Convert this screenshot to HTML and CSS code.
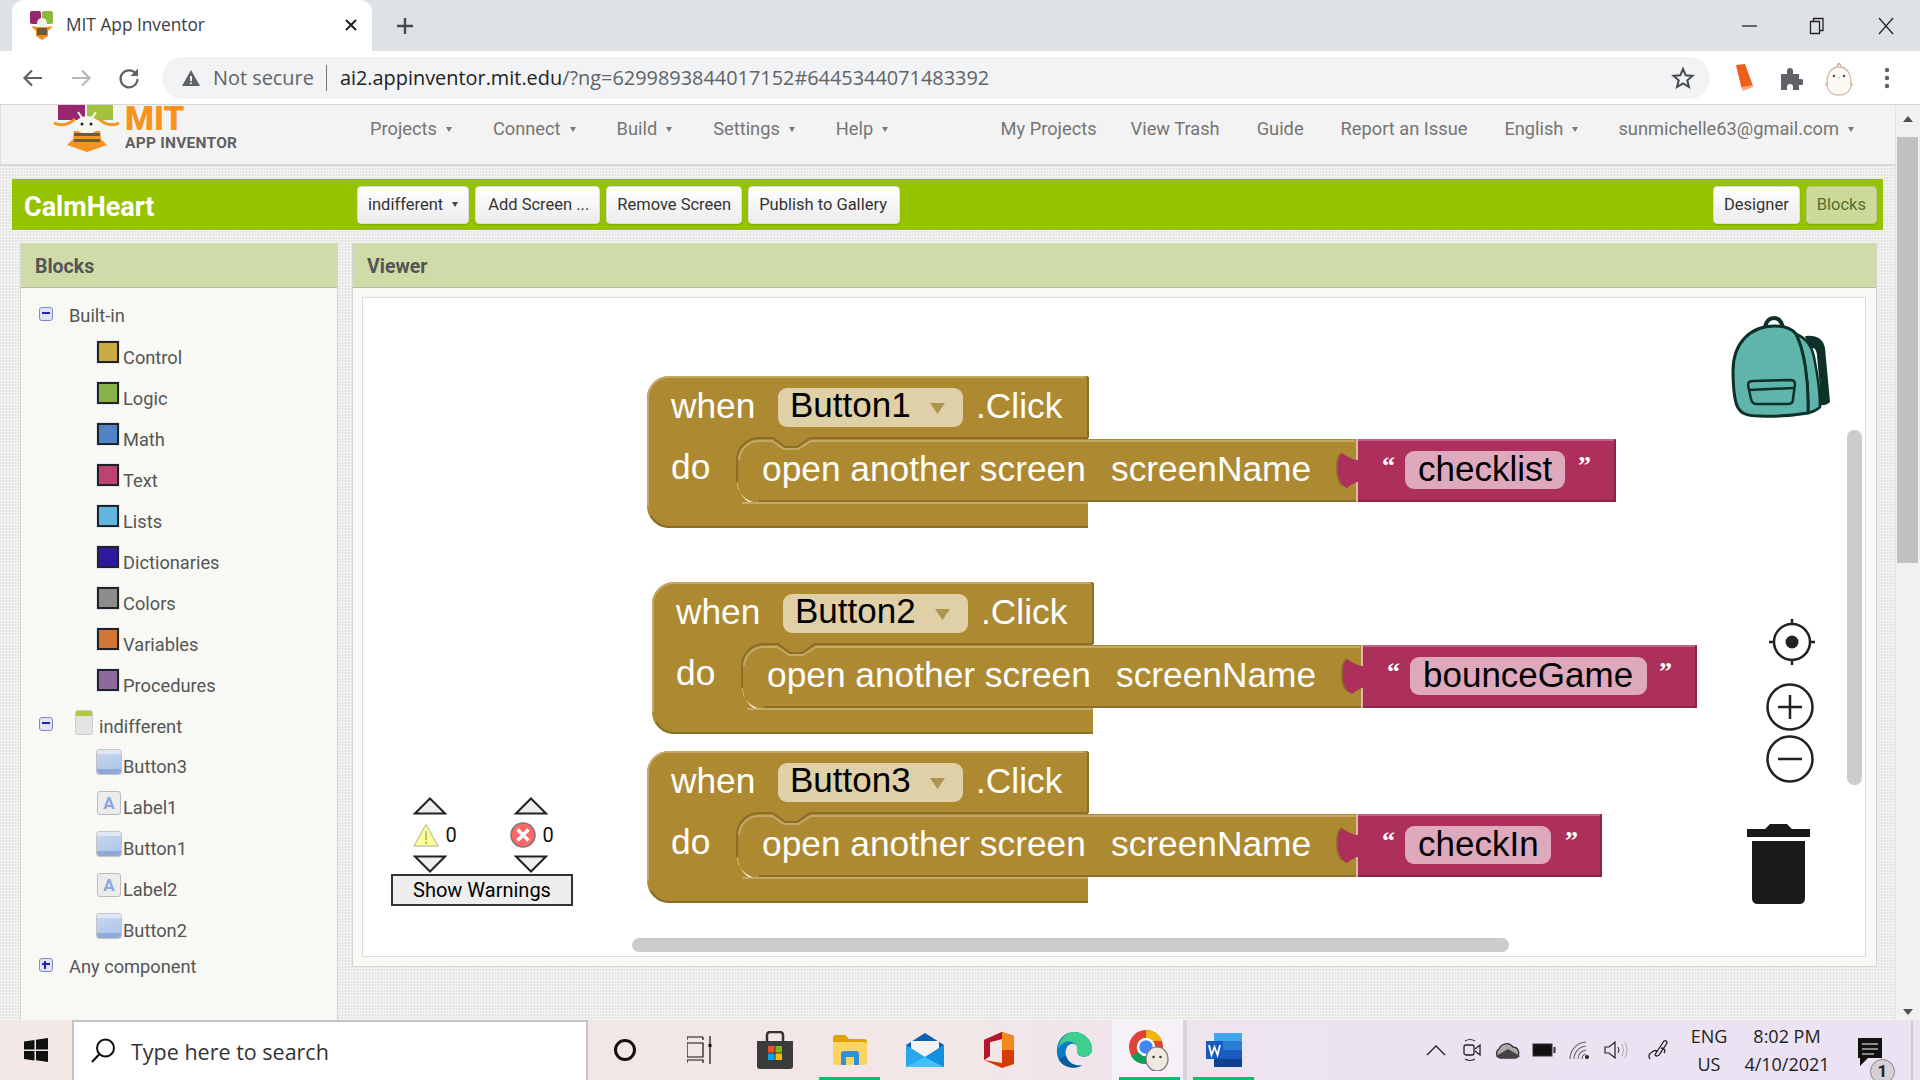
FILE: index.html
```html
<!DOCTYPE html>
<html lang="en">

<head>
  <meta charset="UTF-8" />
  <title>MIT App Inventor</title>
  <link rel="stylesheet" href="styles.css">
</head>

<body>
  <!-- shared block shapes -->
  <svg class="defs" width="0" height="0">
    <symbol id="event-block" overflow="visible">
      <path fill="#ad8a31" d="M0 22A22 22 0 0 1 22 0H441V63H710V126H441V152H22A22 22 0 0 1 0 130Z" />
      <path fill="none" stroke="#c4a866" stroke-width="2" d="M1 130V22A21 21 0 0 1 22 1H438" />
      <path fill="none" stroke="#8a6e27" stroke-width="2" d="M441 1V62M441 151H22A21 21 0 0 1 4 140" />
      <path fill="#fff" d="M90 104A22 22 0 0 0 112 127H104Q92 122 90 104Z" />
      <path fill="none" stroke="#8a6e27" stroke-width="2" d="M441 62H163L150 71H138L126 62H112A22 22 0 0 0 90 84V106" />
      <path fill="none" stroke="#c4a866" stroke-width="2" d="M92 84A20 20 0 0 1 112 65H125L137 73H151L164 65H708M95 127H441" />
      <path fill="none" stroke="#8a6e27" stroke-width="2" d="M112 125H710" />
      <rect class="dropdown" x="131" y="12" width="185" height="39" rx="9" />
      <path fill="#ad944f" d="M283 27H298L290.500 38Z" />
    </symbol>
    <symbol id="string-socket" overflow="visible">
      <path fill="#ad2f5c" d="M710 84Q703 83 695 77Q689 80 690 94Q690 104 695 109L700 112Q705 108 710 106Z" />
      <path fill="none" stroke="#8a6e27" stroke-width="1.500" d="M695 77Q689 80 690 94Q690 104 695 109" />
      <path fill="none" stroke="#e6dcc8" stroke-width="1.500" d="M710 63V84M710 106V126" />
    </symbol>
  </svg>

  <div class="tab-strip">
    <div class="tab">
      <svg class="favicon" width="24" height="30" viewBox="0 0 24 30">
        <rect x="0" y="1" width="11" height="13" rx="2" fill="#97266f" />
        <rect x="12" y="1" width="11" height="13" rx="2" fill="#8fb93a" />
        <circle cx="12" cy="13" r="5" fill="#f1f1e8" />
        <path d="M1 16L7 17L17 17L23 16L18 21V26L12 30L6 26V21Z" fill="#ef8d22" />
        <rect x="7" y="18" width="10" height="7" fill="#6c5a3a" />
      </svg>
      <span class="tab-title">MIT App Inventor</span>
      <svg class="tab-close" width="14" height="14" viewBox="0 0 14 14"><path d="M2 2L12 12M12 2L2 12" stroke="#222" stroke-width="2" /></svg>
    </div>
    <svg class="new-tab" width="20" height="20" viewBox="0 0 20 20"><path d="M10 2V18M2 10H18" stroke="#45484d" stroke-width="2.400" /></svg>
    <div class="window-controls">
      <svg width="16" height="16" viewBox="0 0 16 16"><path d="M0 8H15" stroke="#222" stroke-width="1.300" /></svg>
      <svg class="win-restore" width="16" height="18" viewBox="0 0 16 18"><path d="M1.500 4.500H10.500V16.500H1.500ZM4.500 4V1.500H14V13.500H11" fill="none" stroke="#222" stroke-width="1.300" /></svg>
      <svg width="16" height="18" viewBox="0 0 16 18"><path d="M1 1L15 17M15 1L1 17" stroke="#222" stroke-width="1.200" /></svg>
    </div>
  </div>

  <div class="toolbar">
    <svg class="tool-icon" width="24" height="24" viewBox="0 0 24 24"><path d="M21 12H4M11 4.500L3.500 12L11 19.500" fill="none" stroke="#5f6368" stroke-width="2.200" /></svg>
    <svg class="tool-icon" width="24" height="24" viewBox="0 0 24 24"><path d="M3 12H20M13 4.500L20.500 12L13 19.500" fill="none" stroke="#b5b8bc" stroke-width="2.200" /></svg>
    <svg class="tool-icon" width="24" height="24" viewBox="0 0 24 24"><path d="M19 8A8.500 8.500 0 1 0 20.500 13" fill="none" stroke="#5f6368" stroke-width="2.200" /><path d="M21 2.500V10H13.500Z" fill="#5f6368" /></svg>
    <div class="address-bar">
      <svg width="22" height="20" viewBox="0 0 22 20"><path d="M11 2L20 18H2Z" fill="#5f6368" /><path d="M11 8V13M11 14.500V16" stroke="#f1f3f4" stroke-width="2" /></svg>
      <span class="not-secure">Not secure</span>
      <span class="address-sep"></span>
      <span class="url"><span class="url-host">ai2.appinventor.mit.edu</span>/?ng=6299893844017152#6445344071483392</span>
      <svg class="star" width="24" height="24" viewBox="0 0 24 24"><path d="M12 3L14.700 9.300L21.500 9.900L16.300 14.300L17.900 21L12 17.400L6.100 21L7.700 14.300L2.500 9.900L9.300 9.300Z" fill="none" stroke="#45484d" stroke-width="2" /></svg>
    </div>
    <div class="toolbar-ext">
      <svg width="26" height="28" viewBox="0 0 26 28"><path d="M5 1L14 0L22 22L12 26L10 22Z" fill="#ec6018" /><path d="M11 23L22 21V23L12 27Z" fill="#f5a785" /></svg>
      <svg width="24" height="24" viewBox="0 0 24 24"><path d="M2 8H8V5A3 3 0 0 1 14 5V8H20V13H22A3 3 0 0 1 22 19H20V24H14V21A2.500 2.500 0 0 0 8 21V24H2Z" fill="#5f6368" /></svg>
      <svg width="28" height="36" viewBox="0 0 28 36"><path d="M14 7C5 7 2 15 2 23C2 31 7 35 14 35C21 35 26 31 26 23C26 15 23 7 14 7Z" fill="#fdfaf5" stroke="#d4b9a5" stroke-width="1.300" /><path d="M12 7Q14 0 16 7" fill="none" stroke="#c9a78e" stroke-width="1.300" /><circle cx="9" cy="16" r="1.300" fill="#6d4c3a" /><circle cx="19" cy="16" r="1.300" fill="#6d4c3a" /><path d="M13 17H15L14 19Z" fill="#e39a6d" /><path d="M3 22L0 26M25 22L28 26" stroke="#d4b9a5" stroke-width="1.300" /></svg>
      <svg class="chrome-menu" width="8" height="24" viewBox="0 0 8 24"><circle cx="4" cy="4" r="2.200" fill="#5f6368" /><circle cx="4" cy="12" r="2.200" fill="#5f6368" /><circle cx="4" cy="20" r="2.200" fill="#5f6368" /></svg>
    </div>
  </div>

  <div class="main">
    <div class="page">
      <nav class="topnav">
        <div class="logo">
          <svg class="logo-bee" width="67" height="48" viewBox="0 0 67 48">
            <rect x="5" y="0" width="27" height="15" fill="#97266f" />
            <rect x="34" y="0" width="26" height="15" fill="#a1c23d" />
            <path d="M1 18Q12 23 22 14M66 18Q56 23 46 14" fill="none" stroke="#f39322" stroke-width="3" />
            <path d="M25 7L29 13M43 7L39 13" stroke="#f6f6ee" stroke-width="2" />
            <path d="M21 26H47L48 34L54 40L34 47L14 40L20 34Z" fill="#f39322" />
            <ellipse cx="34" cy="20" rx="12" ry="9" fill="#f6f6ee" />
            <circle cx="29" cy="19" r="1.500" fill="#222" /><circle cx="38" cy="19" r="1.500" fill="#222" />
            <rect x="21" y="28" width="26" height="3" fill="#6a5a48" />
            <rect x="21" y="34" width="26" height="3" fill="#6a5a48" />
          </svg>
          <div class="logo-text">
            <span class="logo-mit">MIT</span>
            <span class="logo-app">APP INVENTOR</span>
          </div>
        </div>
        <div class="nav-left">
          <a class="nav-link">Projects<i class="caret"></i></a>
          <a class="nav-link">Connect<i class="caret"></i></a>
          <a class="nav-link">Build<i class="caret"></i></a>
          <a class="nav-link">Settings<i class="caret"></i></a>
          <a class="nav-link">Help<i class="caret"></i></a>
        </div>
        <div class="nav-right">
          <a class="nav-link nav-my">My Projects</a>
          <a class="nav-link">View Trash</a>
          <a class="nav-link">Guide</a>
          <a class="nav-link">Report an Issue</a>
          <a class="nav-link">English<i class="caret"></i></a>
          <a class="nav-link nav-user">sunmichelle63@gmail.com<i class="caret"></i></a>
        </div>
      </nav>

      <div class="project-bar">
        <h1 class="project-name">CalmHeart</h1>
        <div class="project-actions">
          <button class="btn">indifferent<i class="caret caret-dark"></i></button>
          <button class="btn btn-add">Add Screen ...</button>
          <button class="btn">Remove Screen</button>
          <button class="btn btn-publish">Publish to Gallery</button>
        </div>
        <div class="view-switch">
          <button class="btn">Designer</button>
          <button class="btn btn-active">Blocks</button>
        </div>
      </div>

      <div class="panels">
        <section class="panel blocks-panel">
          <h2 class="panel-head">Blocks</h2>
          <ul class="tree">
            <li class="tree-row tree-root"><i class="expander"></i><span>Built-in</span></li>
            <li class="tree-row tree-cat"><i class="swatch swatch-control"></i>Control</li>
            <li class="tree-row tree-cat"><i class="swatch swatch-logic"></i>Logic</li>
            <li class="tree-row tree-cat"><i class="swatch swatch-math"></i>Math</li>
            <li class="tree-row tree-cat"><i class="swatch swatch-text"></i>Text</li>
            <li class="tree-row tree-cat"><i class="swatch swatch-lists"></i>Lists</li>
            <li class="tree-row tree-cat"><i class="swatch swatch-dicts"></i>Dictionaries</li>
            <li class="tree-row tree-cat"><i class="swatch swatch-colors"></i>Colors</li>
            <li class="tree-row tree-cat"><i class="swatch swatch-vars"></i>Variables</li>
            <li class="tree-row tree-cat"><i class="swatch swatch-procs"></i>Procedures</li>
            <li class="tree-row tree-root tree-screen"><i class="expander"></i><i class="form-icon"></i><span>indifferent</span></li>
            <li class="tree-row"><i class="comp-button"></i>Button3</li>
            <li class="tree-row"><i class="comp-label">A</i>Label1</li>
            <li class="tree-row"><i class="comp-button"></i>Button1</li>
            <li class="tree-row"><i class="comp-label">A</i>Label2</li>
            <li class="tree-row"><i class="comp-button"></i>Button2</li>
            <li class="tree-row tree-root tree-any"><i class="expander expander-plus"></i><span>Any component</span></li>
          </ul>
        </section>

        <section class="panel viewer-panel">
          <h2 class="panel-head">Viewer</h2>
          <div class="viewer-body">
            <div class="workspace">

              <svg class="block block-1" width="970" height="153">
                <use href="#event-block" />
                <text class="block-label" x="24" y="42">when</text>
                <text class="block-field" x="143" y="41">Button1</text>
                <text class="block-label" x="329" y="42">.Click</text>
                <text class="block-label" x="24" y="103">do</text>
                <text class="block-label" x="115" y="105">open another screen</text>
                <text class="block-label" x="464" y="105">screenName</text>
                <path fill="#ad2f5c" d="M710 63H969V126H710Z" />
                <path fill="none" stroke="#c5608a" stroke-width="2" d="M711 64H967" />
                <path fill="none" stroke="#8c2449" stroke-width="2" d="M968 64V125H711" />
                <use href="#string-socket" />
                <text class="quote" x="735" y="98">“</text>
                <rect class="string-field" x="758" y="75" width="160" height="38" rx="9" />
                <text class="block-field" x="771" y="105">checklist</text>
                <text class="quote" x="931" y="98">”</text>
              </svg>

              <svg class="block block-2" width="1046" height="153">
                <use href="#event-block" />
                <text class="block-label" x="24" y="42">when</text>
                <text class="block-field" x="143" y="41">Button2</text>
                <text class="block-label" x="329" y="42">.Click</text>
                <text class="block-label" x="24" y="103">do</text>
                <text class="block-label" x="115" y="105">open another screen</text>
                <text class="block-label" x="464" y="105">screenName</text>
                <path fill="#ad2f5c" d="M710 63H1045V126H710Z" />
                <path fill="none" stroke="#c5608a" stroke-width="2" d="M711 64H1043" />
                <path fill="none" stroke="#8c2449" stroke-width="2" d="M1044 64V125H711" />
                <use href="#string-socket" />
                <text class="quote" x="735" y="98">“</text>
                <rect class="string-field" x="758" y="75" width="237" height="38" rx="9" />
                <text class="block-field" x="771" y="105">bounceGame</text>
                <text class="quote" x="1007" y="98">”</text>
              </svg>

              <svg class="block block-3" width="956" height="153">
                <use href="#event-block" />
                <text class="block-label" x="24" y="42">when</text>
                <text class="block-field" x="143" y="41">Button3</text>
                <text class="block-label" x="329" y="42">.Click</text>
                <text class="block-label" x="24" y="103">do</text>
                <text class="block-label" x="115" y="105">open another screen</text>
                <text class="block-label" x="464" y="105">screenName</text>
                <path fill="#ad2f5c" d="M710 63H955V126H710Z" />
                <path fill="none" stroke="#c5608a" stroke-width="2" d="M711 64H953" />
                <path fill="none" stroke="#8c2449" stroke-width="2" d="M954 64V125H711" />
                <use href="#string-socket" />
                <text class="quote" x="735" y="98">“</text>
                <rect class="string-field" x="758" y="75" width="146" height="38" rx="9" />
                <text class="block-field" x="771" y="105">checkIn</text>
                <text class="quote" x="918" y="98">”</text>
              </svg>

              <div class="warnings">
                <div class="warn-col">
                  <svg width="34" height="18" viewBox="0 0 34 18"><path d="M17 1.500L32 16.500H2Z" fill="#eee" stroke="#222" stroke-width="2" /></svg>
                  <div class="warn-count warn-count-yellow">
                    <svg width="26" height="24" viewBox="0 0 26 24"><path d="M13 1.500L25 23H1Z" fill="#ffff99" stroke="#c8c8a0" stroke-width="1.500" stroke-linejoin="round" /><path d="M13 8V17M13 18.500V21" stroke="#aaa860" stroke-width="1.500" /></svg>
                    <span>0</span>
                  </div>
                  <svg width="34" height="18" viewBox="0 0 34 18"><path d="M2 1.500H32L17 16.500Z" fill="#eee" stroke="#222" stroke-width="2" /></svg>
                </div>
                <div class="warn-col">
                  <svg width="34" height="18" viewBox="0 0 34 18"><path d="M17 1.500L32 16.500H2Z" fill="#eee" stroke="#222" stroke-width="2" /></svg>
                  <div class="warn-count">
                    <svg width="26" height="26" viewBox="0 0 26 26"><circle cx="13" cy="13" r="12" fill="#f66" stroke="#777" stroke-width="1.500" /><path d="M7.500 7.500L18.500 18.500M18.500 7.500L7.500 18.500" stroke="#fff" stroke-width="3.500" /></svg>
                    <span>0</span>
                  </div>
                  <svg width="34" height="18" viewBox="0 0 34 18"><path d="M2 1.500H32L17 16.500Z" fill="#eee" stroke="#222" stroke-width="2" /></svg>
                </div>
                <button class="warn-btn">Show Warnings</button>
              </div>

              <svg class="backpack" width="120" height="120" viewBox="0 0 120 120">
                <path d="M45 22Q47 13 54 13Q61 13 63 23" fill="none" stroke="#0d3029" stroke-width="4" />
                <path d="M85 31Q102 29 105 43L110 97Q106 101 99 100L94 52Z" fill="#0d3029" />
                <path d="M92 43Q96 42 97 50L100 84L97 84Z" fill="#fff" />
                <path d="M76 29C86 33 92 42 94 52C98 72 100 90 100 102Q96 106 88 108C89 75 84 45 76 29Z" fill="#5fb5ab" stroke="#0d3029" stroke-width="2.500" stroke-linejoin="round" />
                <path d="M13 66C13 38 30 21 55 21C66 21 72 24 76 29C84 45 89 75 88 108Q64 112 40 111C25 111 19 108 16 98C14 90 13 78 13 66Z" fill="#5fb5ab" stroke="#0d3029" stroke-width="3" />
                <path d="M28 80Q28 76 33 76L70 75Q75 75 75 79L73 94Q73 99 68 99L37 99Q32 99 31 94Z" fill="#5fb5ab" stroke="#0d3029" stroke-width="2.500" />
                <path d="M29 85L74 83" stroke="#0d3029" stroke-width="2.500" />
              </svg>

              <svg class="target" width="48" height="48" viewBox="0 0 48 48">
                <circle cx="24" cy="24" r="18" fill="none" stroke="#222" stroke-width="2.500" />
                <circle cx="24" cy="24" r="6.500" fill="#222" />
                <path d="M24 1V7M24 41V47M1 24H7M41 24H47" stroke="#222" stroke-width="2.500" />
              </svg>
              <svg class="zoom-in" width="48" height="48" viewBox="0 0 48 48"><circle cx="24" cy="24" r="22.500" fill="none" stroke="#222" stroke-width="2.500" /><path d="M24 12V36M12 24H36" stroke="#222" stroke-width="2.500" /></svg>
              <svg class="zoom-out" width="48" height="48" viewBox="0 0 48 48"><circle cx="24" cy="24" r="22.500" fill="none" stroke="#222" stroke-width="2.500" /><path d="M12 24H36" stroke="#222" stroke-width="2.500" /></svg>
              <svg class="trash" width="63" height="82" viewBox="0 0 63 82">
                <path d="M0 14V6H18L23 1H40L45 6H63V14Z" fill="#1a1a1a" />
                <path d="M5 18H58V75Q58 81 52 81H11Q5 81 5 75Z" fill="#1a1a1a" />
              </svg>

              <div class="ws-scroll-v"></div>
              <div class="ws-scroll-h"></div>
            </div>
          </div>
        </section>
      </div>
    </div>

    <div class="page-scroll">
      <i class="scroll-up"></i>
      <div class="scroll-thumb"></div>
      <i class="scroll-down"></i>
    </div>
  </div>

  <footer class="taskbar">
    <div class="start">
      <svg width="24" height="24" viewBox="0 0 24 24"><path d="M0 3.500L10.500 2V11.500H0ZM12 1.800L24 0V11.500H12ZM0 13H10.500V22.500L0 21ZM12 13H24V24L12 22.300Z" fill="#111" /></svg>
    </div>
    <div class="search-box">
      <svg width="28" height="28" viewBox="0 0 28 28"><circle cx="16.500" cy="11" r="8.500" fill="none" stroke="#111" stroke-width="2" /><path d="M10.500 17L3 25" stroke="#111" stroke-width="2.200" /></svg>
      <span>Type here to search</span>
    </div>
    <div class="task-item">
      <svg width="24" height="24" viewBox="0 0 24 24"><circle cx="12" cy="12" r="9.500" fill="none" stroke="#111" stroke-width="3" /></svg>
    </div>
    <div class="task-item">
      <svg width="26" height="30" viewBox="0 0 26 30"><path d="M0 2H16M0 5V2M16 5V2M0 8H16V22H0ZM0 28V25H16V28M23 1V29" fill="none" stroke="#111" stroke-width="1.200" /><rect x="21.500" y="9" width="3" height="3" fill="#111" /></svg>
    </div>
    <div class="task-item">
      <svg width="36" height="38" viewBox="0 0 36 38"><path d="M10 10V4Q10 1 13 1H23Q26 1 26 4V10" fill="none" stroke="#333" stroke-width="2.500" /><path d="M0 10H36V35Q36 38 33 38H3Q0 38 0 35Z" fill="#3b3b3b" /><rect x="11" y="15" width="6.500" height="6.500" fill="#f25022" /><rect x="18.500" y="15" width="6.500" height="6.500" fill="#7fba00" /><rect x="11" y="22.500" width="6.500" height="6.500" fill="#00a4ef" /><rect x="18.500" y="22.500" width="6.500" height="6.500" fill="#ffb900" /></svg>
    </div>
    <div class="task-item task-open">
      <svg width="34" height="30" viewBox="0 0 34 30"><path d="M0 3Q0 0 3 0H12L16 4H31Q34 4 34 7V9H0Z" fill="#e0a100" /><path d="M0 7H31Q34 7 34 10V27Q34 30 31 30H3Q0 30 0 27Z" fill="#fcd462" /><path d="M8 30V19Q8 16 11 16H23Q26 16 26 19V30H21V22H13V30Z" fill="#2e8fdc" /></svg>
    </div>
    <div class="task-item">
      <svg width="38" height="34" viewBox="0 0 38 34"><path d="M0 12L19 0L38 12V34H0Z" fill="#0a62b5" /><path d="M5 8H33V18L19 26L5 18Z" fill="#f3f3f3" /><path d="M0 12L19 24L38 12V34H0Z" fill="#28a8ea" /><path d="M19 24L38 34H0Z" fill="#3dc3f7" /><path d="M19 24L38 12V34Z" fill="#1490df" /></svg>
    </div>
    <div class="task-item">
      <svg width="30" height="36" viewBox="0 0 30 36"><path d="M0 8L18 0L30 4V32L18 36L0 28L18 31V7L6 10V24L0 28Z" fill="#d83b01" /><path d="M0 8L18 0V7L6 10V24L0 28Z" fill="#b7132f" /><path d="M18 0L30 4V18H18Z" fill="#f38a1d" /></svg>
    </div>
    <div class="task-item">
      <svg width="36" height="36" viewBox="0 0 36 36"><path d="M18 0C28 0 36 8 36 17C36 24 29 26 24 24C19 22 24 16 20 13C14 9 8 16 10 24C12 31 20 35 26 33C20 38 8 36 3 28C-3 16 4 0 18 0Z" fill="#0f7cc9" /><path d="M36 17C36 24 29 26 24 24C19 22 23 17 20 13C15 7 6 9 2 17C4 6 11 0 18 0C28 0 36 8 36 17Z" fill="#3ecf8e" /><path d="M10 24C12 31 20 35 26 33C20 38 8 36 3 28C4 26 7 25 10 24Z" fill="#0c5a9e" /></svg>
    </div>
    <div class="task-item task-open task-active">
      <svg width="42" height="42" viewBox="0 0 42 42"><circle cx="18" cy="18" r="17" fill="#db4437" /><path d="M18 18L3 27A17 17 0 0 0 18 35Z" fill="#0f9d58" /><path d="M18 1A17 17 0 0 1 34 12H18Z" fill="#f4b400" /><circle cx="18" cy="18" r="8" fill="#4285f4" stroke="#fff" stroke-width="2.500" /><ellipse cx="29" cy="30" rx="11" ry="12" fill="#efe9e2" stroke="#777" stroke-width="1.200" /><circle cx="25.500" cy="28" r="1.300" fill="#444" /><circle cx="32.500" cy="28" r="1.300" fill="#444" /></svg>
    </div>
    <div class="task-item task-open">
      <svg width="36" height="34" viewBox="0 0 36 34"><path d="M8 0H36V8H8Z" fill="#41a5ee" /><path d="M8 8H36V17H8Z" fill="#2b7cd3" /><path d="M8 17H36V26H8Z" fill="#185abd" /><path d="M8 26H36V34H8Z" fill="#103f91" /><rect x="0" y="8" width="17" height="18" fill="#185abd" /><path d="M3 12L5.500 22L8.500 14L11.500 22L14 12" fill="none" stroke="#fff" stroke-width="1.800" /></svg>
    </div>

    <div class="tray">
      <div class="tray-icon"><svg width="20" height="12" viewBox="0 0 20 12"><path d="M1 11L10 2L19 11" fill="none" stroke="#222" stroke-width="1.300" /></svg></div>
      <div class="tray-icon"><svg width="18" height="24" viewBox="0 0 18 24"><path d="M2 3Q7 0 12 3M2 21Q7 24 12 21" fill="none" stroke="#333" stroke-width="1.200" /><rect x="1" y="7" width="10" height="10" rx="2" fill="none" stroke="#222" stroke-width="1.300" /><path d="M12 11L17 7V17L12 13" fill="none" stroke="#222" stroke-width="1.300" /></svg></div>
      <div class="tray-icon"><svg width="26" height="18" viewBox="0 0 26 18"><path d="M5 17A5 5 0 0 1 4 8A8 8 0 0 1 18 6A6 6 0 0 1 21 17Z" fill="#aaa" stroke="#333" stroke-width="1.300" /><path d="M1 15L13 8L25 15Q24 17 21 17H5Q2 17 1 15Z" fill="#444" /></svg></div>
      <div class="tray-icon"><svg width="24" height="14" viewBox="0 0 24 14"><rect x="1" y="1" width="19" height="12" fill="#111" stroke="#333" /><rect x="21.500" y="4" width="2" height="6" fill="#333" /></svg></div>
      <div class="tray-icon"><svg width="22" height="20" viewBox="0 0 22 20"><path d="M1 19A17 17 0 0 1 17 2M5 19A13 13 0 0 1 17 6M9 19A9 9 0 0 1 17 10M13 19A5 5 0 0 1 17 14" fill="none" stroke="#666" stroke-width="1.100" /><circle cx="18" cy="17" r="2" fill="#222" /></svg></div>
      <div class="tray-icon"><svg width="24" height="20" viewBox="0 0 24 20"><path d="M1 7H5L11 2V18L5 13H1Z" fill="none" stroke="#222" stroke-width="1.200" /><path d="M14 7Q16 10 14 13" fill="none" stroke="#222" /><path d="M18 4Q21 10 18 16M21 2Q25 10 21 18" fill="none" stroke="#aaa" /></svg></div>
      <div class="tray-icon tray-pen"><svg width="22" height="22" viewBox="0 0 22 22"><path d="M9 14L17 2Q20 1 20 4L12 16Q9 18 8 16Z" fill="none" stroke="#222" stroke-width="1.300" /><path d="M3 20Q0 16 5 13Q9 10 10 13M14 9Q20 10 17 14" fill="none" stroke="#222" stroke-width="1.300" /></svg></div>
      <div class="tray-lang"><span>ENG</span><span>US</span></div>
      <div class="tray-clock"><span>8:02 PM</span><span>4/10/2021</span></div>
      <div class="tray-notify">
        <svg width="24" height="28" viewBox="0 0 24 28"><path d="M0 0H24V20H10L2 28V20H0Z" fill="#111" /><path d="M4 6H20M4 11H20M4 16H16" stroke="#fff" stroke-width="1.200" /></svg>
        <span class="notify-badge">1</span>
      </div>
    </div>
  </footer>
</body>

</html>
```

FILE: styles.css
```css
* {
  box-sizing: border-box;
}

html,
body {
  margin: 0;
  height: 1080px;
  overflow: hidden;
}

body {
  display: flex;
  flex-direction: column;
  font-family: Roboto, sans-serif;
  background: #fff;
}

i {
  font-style: normal;
}

.defs {
  position: absolute;
}

/* browser chrome */
.tab-strip {
  display: flex;
  align-items: center;
  height: 51px;
  padding-left: 12px;
  background: #dee1e6;
}

.tab {
  display: flex;
  align-items: center;
  align-self: flex-end;
  width: 360px;
  height: 51px;
  padding: 0 14px 2px 18px;
  background: #fff;
  border-radius: 12px 12px 0 0;
}

.favicon {
  margin-right: 12px;
}

.tab-title {
  flex: 1;
  font-family: "Open Sans", sans-serif;
  font-size: 17.300px;
  color: #3c4043;
}

.new-tab {
  margin-left: 23px;
}

.window-controls {
  display: flex;
  align-items: center;
  gap: 51px;
  margin-left: auto;
  padding-right: 26px;
}

.win-restore {
  margin-right: 2px;
}

.toolbar {
  display: flex;
  align-items: center;
  height: 54px;
  padding-left: 21px;
  border-bottom: 1px solid #d6d6d6;
}

.tool-icon {
  margin-right: 24px;
}

.tool-icon:nth-child(3) {
  margin-right: 21px;
}

.address-bar {
  display: flex;
  align-items: center;
  width: 1548px;
  height: 42px;
  padding: 0 15px 0 18px;
  background: #f1f3f4;
  border-radius: 21px;
  font-family: "Open Sans", sans-serif;
  font-size: 19.900px;
  line-height: 44px;
  color: #5f6368;
}

.not-secure {
  margin-left: 11px;
}

.address-sep {
  width: 1px;
  height: 26px;
  margin: 0 13px 0 12px;
  background: #777;
}

.url-host {
  color: #202124;
}

.star {
  margin-left: auto;
}

.toolbar-ext {
  display: flex;
  align-items: center;
  gap: 22px;
  margin-left: 21px;
}

.chrome-menu {
  margin-left: 8px;
}

/* page */
.main {
  flex: 1;
  display: flex;
  min-height: 0;
}

.page {
  flex: 1;
  min-width: 0;
  overflow: hidden;
  background-color: #ececea;
  background-image:
    repeating-linear-gradient(0deg, rgba(255, 255, 255, 0.5) 0 1px, transparent 1px 3px),
    repeating-linear-gradient(90deg, rgba(200, 200, 200, 0.25) 0 1px, transparent 1px 3px);
}

.topnav {
  display: flex;
  align-items: flex-start;
  height: 61px;
  padding-right: 41px;
  background: #f3f3f3;
  border-bottom: 2px solid #d9d9d9;
  border-left: 1px solid #ddd;
}

.logo {
  display: flex;
  width: 369px;
  padding-left: 52px;
}

.logo-bee {
  flex: none;
}

.logo-text {
  display: flex;
  flex-direction: column;
  height: 48px;
  margin-left: 5px;
}

.logo-mit {
  font-size: 33px;
  font-weight: 900;
  line-height: 28px;
  color: #f7931e;
}

.logo-app {
  margin-top: 3px;
  font-size: 15.500px;
  font-weight: 700;
  line-height: 15px;
  letter-spacing: 0.250px;
  white-space: nowrap;
  color: #606060;
}

.nav-left,
.nav-right {
  display: flex;
  height: 47px;
  align-items: center;
}

.nav-left {
  gap: 41px;
}

.nav-right {
  gap: 37px;
  margin-left: auto;
}

.nav-my {
  margin-right: -3px;
}

.nav-user {
  margin-left: 3px;
}

.nav-link {
  font-size: 18.250px;
  color: #757575;
  white-space: nowrap;
}

.caret {
  display: inline-block;
  margin-left: 9px;
  vertical-align: 3px;
  border-top: 5px solid #777;
  border-left: 3px solid transparent;
  border-right: 3px solid transparent;
}

.caret-dark {
  border-top-color: #444;
}

.project-bar {
  display: flex;
  align-items: center;
  height: 51px;
  margin: 13px 12px 0;
  padding: 0 6px 0 12px;
  background: #95c300;
}

.project-name {
  width: 333px;
  margin: 0;
  padding-top: 4px;
  font-size: 27px;
  font-weight: 700;
  color: #fff;
}

.project-actions,
.view-switch {
  display: flex;
  gap: 6px;
}

.view-switch {
  margin-left: auto;
}

.btn {
  height: 38px;
  padding: 0 10px;
  font-family: Roboto, sans-serif;
  font-size: 16.500px;
  color: #333;
  background: linear-gradient(#fff, #ececec);
  border: 1px solid #ddd;
  border-radius: 4px;
  box-shadow: 0 1px 1px rgba(0, 0, 0, 0.15);
  white-space: nowrap;
}

.btn-add {
  padding-left: 12px;
}

.btn-publish {
  padding-right: 12px;
}

.btn-active {
  color: #5a6b2a;
  background: #cbd99a;
  border-color: #bccb88;
}

.panels {
  display: flex;
  gap: 14px;
  padding: 13px 0 0 20px;
}

.panel {
  background: #f8f9f4;
  border-left: 1px solid #d4d4d4;
  border-right: 1px solid #d4d4d4;
}

.blocks-panel {
  width: 318px;
  height: 800px;
}

.viewer-panel {
  width: 1525px;
  height: 724px;
  border-bottom: 1px solid #d8d8d8;
}

.panel-head {
  height: 45px;
  margin: 0;
  padding-left: 14px;
  font-size: 19.500px;
  font-weight: 700;
  line-height: 47px;
  color: #555;
  background: #cfdcaa;
  border-bottom: 1px solid #b5bd9e;
}

/* component tree */
.tree {
  margin: 0;
  padding: 7px 0 0;
  list-style: none;
  font-size: 18.250px;
  color: #555;
}

.tree-row {
  display: flex;
  align-items: center;
  height: 41px;
  padding-left: 76px;
}

.tree-cat,
.tree-screen {
  padding-top: 2px;
}

.tree-root {
  padding-left: 18px;
}

.tree-root span {
  margin-left: 16px;
}

.tree-screen span {
  margin-left: 6px;
}

.tree-any {
  height: 31px;
}

.expander {
  position: relative;
  flex: none;
  width: 14px;
  height: 14px;
  margin-bottom: 3px;
  background: #e0e5f6;
  border: 1.500px solid #7f88cc;
  border-radius: 3px;
}

.expander::before {
  content: "";
  position: absolute;
  left: 2px;
  right: 2px;
  top: 4px;
  height: 2px;
  background: #2222bb;
}

.expander-plus::after {
  content: "";
  position: absolute;
  top: 2px;
  bottom: 2px;
  left: 4px;
  width: 2px;
  background: #2222bb;
}

.swatch {
  flex: none;
  width: 22px;
  height: 22px;
  margin: 0 4px 12px 0;
  border: 2px solid #222;
  box-shadow: 0 0 0 1px #e3e7f3;
}

.swatch-control { background: #ccaa44; }
.swatch-logic { background: #8ab24a; }
.swatch-math { background: #5283c4; }
.swatch-text { background: #bc4370; }
.swatch-lists { background: #62b5dd; }
.swatch-dicts { background: #2d1a9e; }
.swatch-colors { background: #8d8d8d; }
.swatch-vars { background: #d37533; }
.swatch-procs { background: #8e6a9c; }

.form-icon {
  flex: none;
  width: 18px;
  height: 25px;
  margin: 0 0 9px 22px;
  background: linear-gradient(#aec93b 0 5px, #e4e4e2 5px);
  border: 1px solid #ccc;
  border-radius: 3px;
}

.tree-screen .expander {
  margin-bottom: 5px;
}

.comp-button {
  flex: none;
  width: 24px;
  height: 24px;
  margin: 0 2px 9px 0;
  background:
    linear-gradient(#dfe7f5 0 4px, transparent 4px),
    linear-gradient(transparent 19px, #8faad6 19px),
    linear-gradient(160deg, #c9d9f0, #a9c2e6);
  border-radius: 3px;
  box-shadow: 0 0 0 1px #c4c4c4;
}

.comp-label {
  flex: none;
  width: 24px;
  height: 24px;
  margin: 0 2px 9px 0;
  font-size: 17px;
  font-weight: 700;
  line-height: 22px;
  text-align: center;
  color: #8aa8dc;
  background: #ececec;
  border: 1px solid #bbb;
  border-radius: 3px;
}

/* viewer */
.viewer-body {
  padding: 9px 10px 10px 9px;
}

.workspace {
  position: relative;
  height: 660px;
  overflow: hidden;
  background: #fff;
  border: 1px solid #dcdcdc;
}

.block,
.backpack,
.target,
.zoom-in,
.zoom-out,
.trash,
.warnings,
.ws-scroll-v,
.ws-scroll-h {
  position: absolute;
}

.block {
  overflow: visible;
}

.block-1 { left: 284px; top: 78px; }
.block-2 { left: 289px; top: 284px; }
.block-3 { left: 284px; top: 453px; }

.block-label {
  font-family: "Liberation Sans", sans-serif;
  font-size: 35.300px;
  fill: #fff;
}

.block-field {
  font-family: "Liberation Sans", sans-serif;
  font-size: 35px;
  fill: #000;
}

.dropdown {
  fill: #dfd0a8;
}

.string-field {
  fill: #dea9bd;
}

.quote {
  font-family: "Liberation Serif", serif;
  font-size: 26px;
  font-weight: 700;
  fill: #fff;
}

.backpack { left: 1357px; top: 7px; }
.target { left: 1405px; top: 320px; }
.zoom-in { left: 1403px; top: 385px; }
.zoom-out { left: 1403px; top: 437px; }
.trash { left: 1384px; top: 525px; }

.ws-scroll-v {
  left: 1484px;
  top: 132px;
  width: 15px;
  height: 355px;
  background: #ccc;
  border-radius: 7px;
}

.ws-scroll-h {
  left: 269px;
  top: 640px;
  width: 877px;
  height: 14px;
  background: #ccc;
  border-radius: 7px;
}

.warnings {
  left: 28px;
  top: 499px;
  display: grid;
  grid-template-columns: 101px 81px;
  width: 182px;
}

.warn-col {
  display: flex;
  flex-direction: column;
  align-items: center;
  justify-self: start;
  width: 34px;
  margin-left: 22px;
}

.warn-count {
  display: flex;
  align-items: center;
  gap: 6px;
  height: 40px;
  margin-left: 2px;
  font-size: 20px;
  color: #111;
  white-space: nowrap;
}

.warn-count-yellow {
  margin-left: 10px;
}

.warn-btn {
  grid-column: 1 / 3;
  height: 32px;
  margin-top: 1px;
  padding: 0;
  font-family: Roboto, sans-serif;
  font-size: 20px;
  color: #000;
  background: #eee;
  border: 2px solid #333;
}

.page-scroll {
  position: relative;
  width: 25px;
  background: #f1f1f1;
  border-left: 1px solid #e4e4e4;
}

.scroll-thumb {
  width: 21px;
  height: 426px;
  margin: 32px 0 0 1px;
  background: #c1c1c1;
}

.scroll-up,
.scroll-down {
  position: absolute;
  left: 7px;
  border-left: 5px solid transparent;
  border-right: 5px solid transparent;
}

.scroll-up {
  top: 11px;
  border-bottom: 6px solid #505050;
}

.scroll-down {
  bottom: 5px;
  border-top: 6px solid #505050;
}

/* taskbar */
.taskbar {
  display: flex;
  flex: none;
  height: 60px;
  background: linear-gradient(90deg, #f4e8e6, #f2e6e6 50%, #ebe3f2 70%, #ebe3f3);
}

.start {
  display: flex;
  align-items: center;
  justify-content: center;
  width: 72px;
}

.search-box {
  display: flex;
  align-items: center;
  gap: 14px;
  width: 516px;
  padding-left: 15px;
  font-family: "Open Sans", sans-serif;
  font-size: 21.500px;
  color: #333;
  background: #fff;
  border: 2px solid #c4c4c4;
  border-bottom: 0;
}

.task-item {
  position: relative;
  display: flex;
  align-items: center;
  justify-content: center;
  width: 75px;
  margin-left: -0.200px;
}

.task-open::after {
  content: "";
  position: absolute;
  left: 7px;
  right: 7px;
  bottom: 0;
  height: 3px;
  background: #00c16e;
}

.task-active {
  background: #f5f1f7;
  box-shadow: inset -4px 0 0 #d8d4da;
}

.tray {
  display: flex;
  align-items: center;
  margin-left: auto;
  width: 495px;
  margin-right: 7px;
  border-right: 2px solid #ccc;
  height: 100%;
}

.tray-icon {
  display: flex;
  align-items: center;
  justify-content: center;
  width: 36px;
}

.tray-pen {
  width: 48px;
}

.tray-lang,
.tray-clock {
  display: flex;
  flex-direction: column;
  align-items: center;
  gap: 5px;
  font-family: "Open Sans", sans-serif;
  font-size: 18px;
  line-height: 23px;
  color: #222;
}

.tray-lang {
  width: 54px;
}

.tray-clock {
  width: 102px;
}

.tray-notify {
  position: relative;
  width: 65px;
  padding-left: 20px;
  padding-top: 8px;
}

.notify-badge {
  position: absolute;
  left: 32px;
  top: 29px;
  width: 25px;
  height: 25px;
  font-size: 17px;
  font-weight: 700;
  line-height: 23px;
  text-align: center;
  color: #222;
  background: #d5d0d5;
  border: 1px solid #888;
  border-radius: 50%;
}
```
